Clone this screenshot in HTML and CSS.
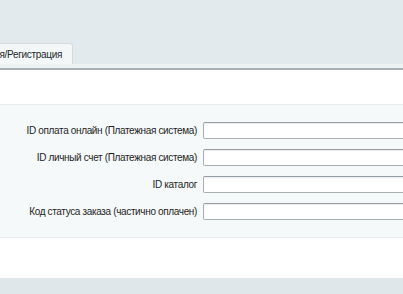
FILE: index.html
```html
<!DOCTYPE html>
<html lang="ru">

<head>
    <meta charset="UTF-8">
    <title>Настройки модуля</title>
    <link rel="stylesheet" href="styles.css">
</head>

<body>
    <div class="page">
        <div class="tabs">
            <span class="tab tab-active">Авторизация/Регистрация</span>
        </div>
        <div class="tab-content">
            <div class="edit-table">
                <div class="row">
                    <label for="pay_online">ID оплата онлайн (Платежная система)</label>
                    <input type="text" id="pay_online" name="pay_online">
                </div>
                <div class="row">
                    <label for="pay_account">ID личный счет (Платежная система)</label>
                    <input type="text" id="pay_account" name="pay_account">
                </div>
                <div class="row">
                    <label for="catalog">ID каталог</label>
                    <input type="text" id="catalog" name="catalog">
                </div>
                <div class="row">
                    <label for="status">Код статуса заказа (частично оплачен)</label>
                    <input type="text" id="status" name="status">
                </div>
            </div>
        </div>
        <div class="footer"></div>
    </div>
</body>

</html>
```

FILE: styles.css
```css
body {
    font-family: 'Liberation Sans', Arial, sans-serif;
    background: #e3eaed;
    margin: 0;
    padding: 0;
    overflow: hidden;
}

.page {
    padding-top: 43px;
}

/* вкладки */
.tabs {
    display: flex;
    height: 21px;
    margin-left: -65px;
    border-bottom: 4px solid #edf3f5;
}

.tab {
    display: inline-block;
    padding: 0 10px 0 12px;
    line-height: 22px;
    font-size: 10px;
    letter-spacing: -0.3px;
    color: #262a2d;
    background: #f4f7f8;
    border: 1px solid #d3dadd;
    border-bottom: none;
    border-radius: 3px 3px 0 0;
    white-space: nowrap;
}

.tab-content {
    background: #fff;
    border-top: 2px solid #a8b0b5;
    padding: 34px 0 40px;
}

.edit-table {
    background: #f5f9f9;
    border-top: 1px solid #e6ecee;
    border-bottom: 1px solid #e6ecee;
    padding: 17px 0 17px;
    display: flex;
    flex-direction: column;
    gap: 10px;
}

.row {
    display: flex;
    align-items: center;
    gap: 6px;
}

.row label {
    width: 197px;
    flex: none;
    text-align: right;
    font-size: 10px;
    letter-spacing: -0.35px;
    color: #1f1f1f;
    white-space: nowrap;
}

.row input[type="text"] {
    width: 240px;
    flex: none;
    height: 17px;
    box-sizing: border-box;
    margin: 0;
    padding: 0 4px;
    border: 1px solid #a7afb3;
    border-top-color: #969ea3;
    border-radius: 2px;
    background: #fff;
    box-shadow: inset 0 1px 1px rgba(0, 0, 0, 0.08);
    font-size: 11px;
}

.footer {
    height: 20px;
    background: #dfe7ea;
}
```
